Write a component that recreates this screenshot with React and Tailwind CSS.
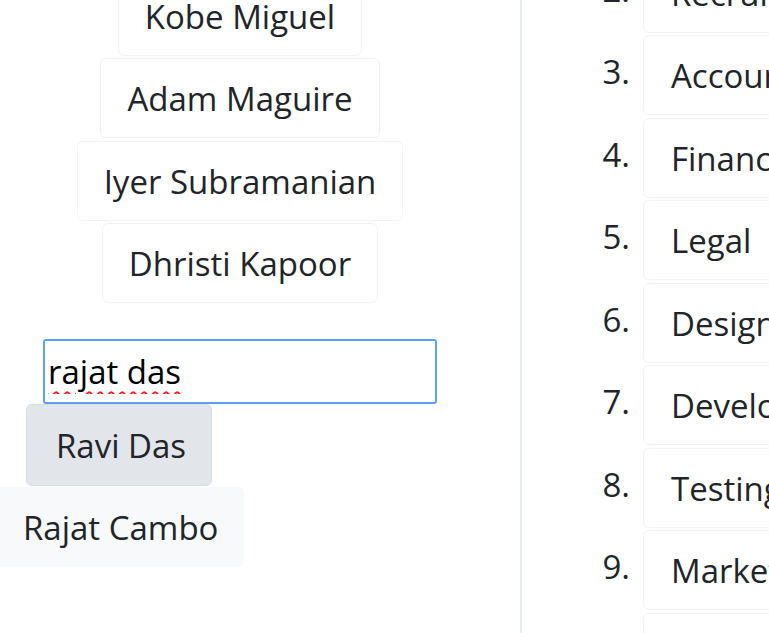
import React from 'react';

const names = ['Kobe Miguel', 'Adam Maguire', 'Iyer Subramanian', 'Dhristi Kapoor'];
const teams = ['Human Resources', 'Recruitment', 'Accounts', 'Finance', 'Legal', 'Design', 'Development', 'Testing', 'Marketing', 'Sales'];

const App = () => {
  return (
    <div
      className="h-[633px] w-[769px] overflow-hidden bg-white text-[#212529] text-[33px]"
      style={{ fontFamily: '"Open Sans", "Noto Sans", sans-serif' }}
    >
      <div className="flex h-full">
        {/* Left: people + search */}
        <div className="w-[520px] shrink-0">
          <div className="-mt-[107px] flex w-[480px] flex-col items-center gap-[2.5px]">
            {['Zara Ali', ...names].map((n) => (
              <div
                key={n}
                className="flex h-[80px] items-center rounded-md border border-[#f1f3f5] px-[26px] pt-[2px]"
              >
                {n}
              </div>
            ))}
          </div>

          {/* Search box with results */}
          <div className="mt-[36px] flex flex-col items-start">
            <input
              defaultValue="rajat das"
              spellCheck
              className="ml-[43px] h-[65px] w-[394px] rounded-[3px] border-2 border-[#5e9df8] px-[3px] text-[33px] text-black underline decoration-wavy decoration-[#ff1a1a] decoration-[1.5px] underline-offset-[7px] outline-none"
            />
            <div className="ml-[26px] flex h-[82px] items-center rounded-md border border-[#d8dce1] bg-[#e2e5e9] pl-[29px] pr-[25px] pt-[2px]">
              Ravi Das
            </div>
            <div className="-ml-[8px] mt-[1px] flex h-[80px] items-center rounded-md border border-[#f8f9fa] bg-[#f8f9fa] pl-[30px] pr-[25px] pt-[2px]">
              Rajat Cambo
            </div>
          </div>
        </div>

        {/* Divider */}
        <div className="w-[2px] shrink-0 bg-[#e8ebef]" />

        {/* Right: numbered list */}
        <div className="flex-1 overflow-hidden">
          <ol className="-mt-[130px] flex flex-col gap-[2.5px]">
            {teams.map((t, i) => (
              <li key={t} className="flex items-start">
                <span className="w-[108px] shrink-0 pt-[17px] text-right leading-[40px]">
                  {i + 1}.
                </span>
                <div className="ml-[13px] flex h-[80px] w-[300px] shrink-0 items-center whitespace-nowrap rounded-md border border-[#f1f3f5] pl-[27px] pt-[2px]">
                  {t}
                </div>
              </li>
            ))}
          </ol>
        </div>
      </div>
    </div>
  );
};

export default App;
